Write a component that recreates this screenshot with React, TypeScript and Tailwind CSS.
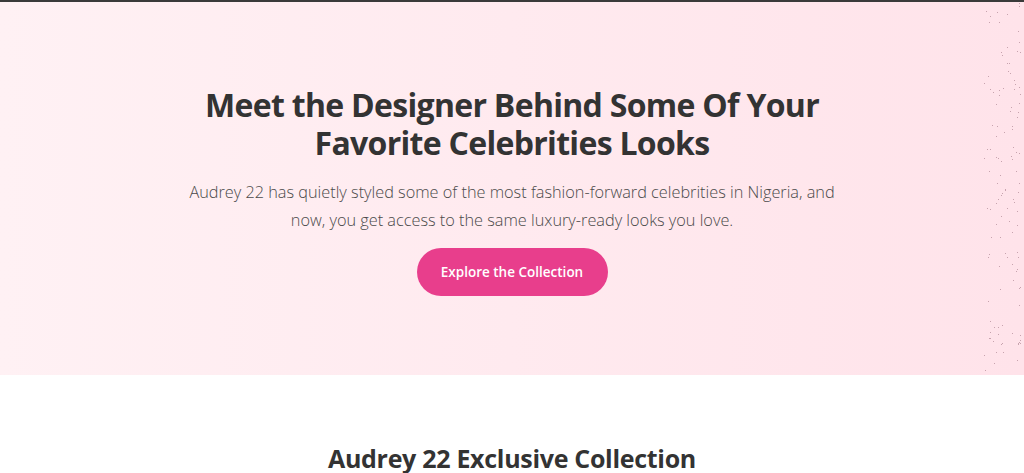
export default function App() {
  // scattered dots along the right edge of the hero
  let seed = 7;
  const rand = () => {
    seed = (seed * 16807) % 2147483647;
    return seed / 2147483647;
  };
  const dots = Array.from({ length: 120 }, () => ({
    x: 3 + Math.pow(rand(), 1.5) * 36,
    y: rand() * 370,
  }));

  return (
    <div className="min-h-screen bg-white" style={{ fontFamily: '"Open Sans", "Liberation Sans", sans-serif' }}>
      <div className="h-[2px] bg-[#3a3a3a]" />

      {/* Hero */}
      <section className="relative overflow-hidden bg-gradient-to-r from-[#fff1f4] to-[#ffe3ea] h-[373px]">
        <div className="absolute right-0 top-0 h-full w-[44px]">
          {dots.map((d, i) => (
            <span
              key={i}
              className="absolute w-[1px] h-[1px] bg-[#c7a3ae]"
              style={{ right: Math.round(d.x), top: Math.round(d.y) }}
            />
          ))}
        </div>

        <div className="flex flex-col items-center text-center pt-[84px]">
          <h1 className="text-[32px] leading-[38px] font-bold text-[#333333] tracking-[-0.7px]">
            Meet the Designer Behind Some Of Your
            <br />
            Favorite Celebrities Looks
          </h1>
          <p className="mt-[16px] text-[16.3px] leading-[28px] font-light text-[#4a4a4a] max-w-[680px]">
            Audrey 22 has quietly styled some of the most fashion-forward celebrities in Nigeria, and
            <br />
            now, you get access to the same luxury-ready looks you love.
          </p>
          <button className="mt-[14px] h-[48px] w-[191px] rounded-full bg-[#e83e8c] text-white text-[13.5px] font-semibold">
            Explore the Collection
          </button>
        </div>
      </section>

      {/* Collection */}
      <section className="pt-[66px] flex justify-center">
        <h2 className="text-[25px] leading-[34px] font-bold text-[#333333] tracking-[-0.3px]">
          Audrey 22 Exclusive Collection
        </h2>
      </section>
    </div>
  );
}
